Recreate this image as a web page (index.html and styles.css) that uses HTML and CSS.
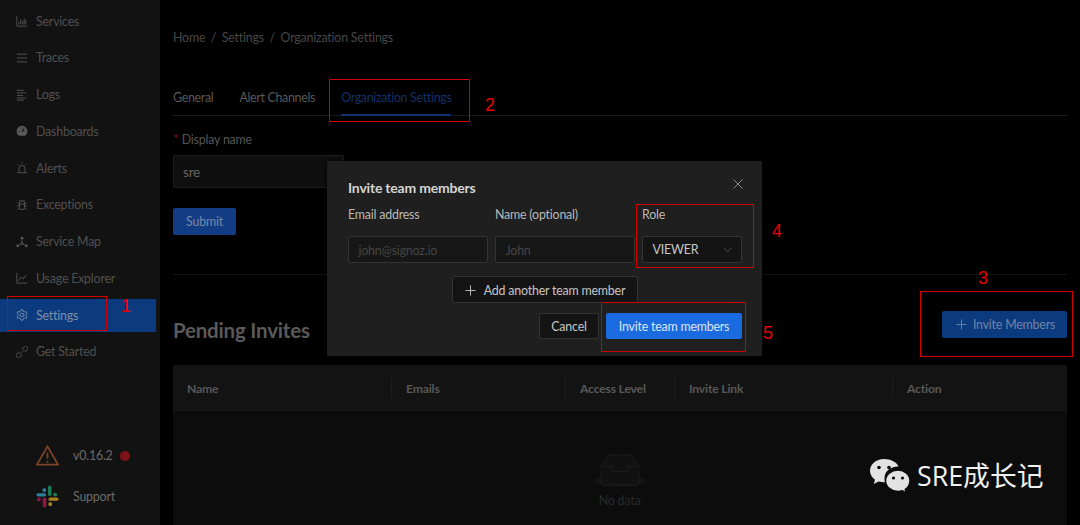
FILE: index.html
```html
<!DOCTYPE html>
<html lang="en">
<head>
<meta charset="utf-8">
<title>Organization Settings</title>
<link rel="stylesheet" href="styles.css">
</head>
<body>
<div class="page">
  <aside class="sidebar">
    <nav class="nav">
      <a class="nav-item"><svg class="ico" viewBox="0 0 14 14"><path d="M1 1v12h12M3.500 11V8M5.500 11V5M7.500 11V7M9.500 11V4M11.500 11V6" /></svg>Services</a>
      <a class="nav-item"><svg class="ico" viewBox="0 0 14 14"><path d="M1 2.500h12M1 7h12M1 11.500h12"/></svg>Traces</a>
      <a class="nav-item"><svg class="ico" viewBox="0 0 14 14"><path d="M1 1.500h8M1 4.500h11M1 7.500h7M1 10.500h11M1 13h8"/></svg>Logs</a>
      <a class="nav-item"><svg class="ico" viewBox="0 0 14 14"><path class="fill" d="M7 1a6.300 6.300 0 0 0-6.300 6.300c0 2.200 1 4 2.600 5.200h7.400c1.600-1.200 2.600-3 2.600-5.200A6.300 6.300 0 0 0 7 1z"/><path class="cut" d="M7 8l2.500-3.500M3 7.500h1M10.500 7.500h.6M7 3v1"/></svg>Dashboards</a>
      <a class="nav-item"><svg class="ico" viewBox="0 0 14 14"><path d="M3.500 12V7.500a3.500 3.500 0 0 1 7 0V12M1.500 12.500h11M7 .5v1.500M1.800 2.200l1.200 1.200M12.200 2.200L11 3.400"/></svg>Alerts</a>
      <a class="nav-item"><svg class="ico" viewBox="0 0 14 14"><path d="M4 5a3 3 0 0 1 6 0v4.500a3 3 0 0 1-6 0zM4 6h6M4.800 2.500L3.500.8M9.200 2.500L10.500.8M4 5.500L1.500 4M10 5.500L12.500 4M4 8H1M10 8h3M4 10.500L1.500 12.500M10 10.500l2.500 2"/></svg>Exceptions</a>
      <a class="nav-item"><svg class="ico" viewBox="0 0 14 14"><circle class="fill" cx="7" cy="2.500" r="1.600"/><circle class="fill" cx="2" cy="11.500" r="1.600"/><circle class="fill" cx="12" cy="11.500" r="1.600"/><circle cx="7" cy="8.500" r="1.300"/><path d="M7 4v3M6 9.500l-3 1.500M8 9.500l3 1.500"/></svg>Service Map</a>
      <a class="nav-item"><svg class="ico" viewBox="0 0 14 14"><path d="M1 1v12h12M3 10l3-4 2.500 2L12 3.500"/></svg>Usage Explorer</a>
      <a class="nav-item active"><svg class="ico" viewBox="0 0 14 14"><path d="M5.800 1h2.400l.4 1.800 1.300.7 1.800-.6 1.200 2.100-1.400 1.200v1.600l1.400 1.200-1.200 2.100-1.800-.6-1.300.7L8.200 13H5.800l-.4-1.800-1.300-.7-1.800.6-1.200-2.100 1.400-1.200V6.200L1.100 5l1.200-2.100 1.800.6 1.300-.7z"/><circle cx="7" cy="7" r="2.200"/></svg>Settings</a>
      <a class="nav-item"><svg class="ico" viewBox="0 0 14 14"><path d="M6 8l2-2M7.500 2.500l1.500-1.500a2.800 2.800 0 0 1 4 4l-1.500 1.500-1.200-.4-2.400-2.400zM6.500 11.500L5 13a2.800 2.800 0 0 1-4-4l1.500-1.500 1.200.4 2.400 2.400z"/></svg>Get Started</a>
    </nav>
    <div class="side-foot">
      <div class="foot-row">
        <svg class="foot-ico" viewBox="0 0 24 22"><path class="warn" d="M12 1.500L23 20.500H1z"/><path class="warn" d="M12 8v6.500M12 16.500v2"/></svg>
        <span>v0.16.2</span><i class="dot"></i>
      </div>
      <div class="foot-row">
        <svg class="foot-ico" viewBox="0 0 24 24">
          <g fill="#2b7f9b"><rect x="0.500" y="8.500" width="10" height="3.500" rx="1.700"/><rect x="6.800" y="3.500" width="3.700" height="3.700" rx="1.500"/></g>
          <g fill="#1b7a58"><rect x="12.500" y="0.500" width="3.700" height="11" rx="1.800"/><rect x="18" y="8" width="4" height="4" rx="2"/></g>
          <g fill="#a8801f"><rect x="13" y="13" width="10.500" height="3.500" rx="1.700"/><rect x="13" y="18" width="3.700" height="4" rx="1.500"/></g>
          <g fill="#8c1743"><rect x="7" y="13" width="3.800" height="10.500" rx="1.800"/><rect x="1" y="13" width="4" height="4" rx="2"/></g>
        </svg>
        <span>Support</span>
      </div>
    </div>
  </aside>

  <main class="main">
    <div class="crumbs"><span>Home</span><b>/</b><span>Settings</span><b>/</b><span>Organization Settings</span></div>
    <div class="tabs">
      <span class="tab">General</span>
      <span class="tab">Alert Channels</span>
      <span class="tab current">Organization Settings</span>
    </div>
    <form class="org-form">
      <div class="field-label"><em>*</em> Display name</div>
      <div class="org-input">sre</div>
      <div class="submit">Submit</div>
    </form>
    <hr class="rule">
    <div class="invites-head">
      <h2>Pending Invites</h2>
      <div class="invite-btn"><svg class="plus" viewBox="0 0 12 12"><path d="M6 .5v11M.5 6h11"/></svg>Invite Members</div>
    </div>
    <section class="table">
      <div class="thead">
        <div class="th">Name</div>
        <div class="th">Emails</div>
        <div class="th">Access Level</div>
        <div class="th">Invite Link</div>
        <div class="th">Action</div>
      </div>
      <div class="empty">
        <svg class="empty-ico" viewBox="0 0 54 36">
          <ellipse class="shadow" cx="27" cy="30" rx="26" ry="5.500"/>
          <path class="box" d="M8 15L16 4h22l8 11v17a2 2 0 0 1-2 2H10a2 2 0 0 1-2-2z"/>
          <path class="tray" d="M8 15h11v3.500a2 2 0 0 0 2 2h12a2 2 0 0 0 2-2V15h11"/>
        </svg>
        <div class="empty-text">No data</div>
      </div>
    </section>
  </main>
</div>

<div class="modal">
  <div class="modal-head"><span class="modal-title">Invite team members</span>
    <svg class="close" viewBox="0 0 10 10"><path d="M.5.5l9 9M9.500.5l-9 9"/></svg>
  </div>
  <div class="modal-grid">
    <label>Email address</label>
    <label>Name (optional)</label>
    <label>Role</label>
    <div class="minput ph">john@signoz.io</div>
    <div class="minput ph">John</div>
    <div class="minput sel">VIEWER<svg class="chev" viewBox="0 0 10 6"><path d="M.5.5L5 5 9.500.5"/></svg></div>
  </div>
  <div class="add-wrap"><div class="add-btn"><svg class="plus light" viewBox="0 0 12 12"><path d="M6 .5v11M.5 6h11"/></svg>Add another team member</div></div>
  <div class="modal-foot">
    <div class="cancel">Cancel</div>
    <div class="primary">Invite team members</div>
  </div>
</div>

<div class="mark box-1"></div><span class="num n1">1</span>
<div class="mark box-2"></div><span class="num n2">2</span>
<div class="mark box-3"></div><span class="num n3">3</span>
<div class="mark box-4"></div><span class="num n4">4</span>
<div class="mark box-5"></div><span class="num n5">5</span>

<div class="watermark">
  <svg class="wechat" viewBox="0 0 42 36">
    <path class="wc" d="M15 1C7 1 1 6.300 1 12.800c0 3.700 2 6.900 5 9l-1.300 4.200 4.800-2.600c1.800.5 3.600.8 5.500.8h1.200c-.5-1.300-.7-2.600-.7-4 0-6.500 6-11.600 13.300-11.600h.8C27.800 4.300 22 1 15 1z"/>
    <circle class="wd" cx="10" cy="9.500" r="1.800"/><circle class="wd" cx="20" cy="9.500" r="1.800"/>
    <path class="wc ring" d="M29 12c-6.800 0-12.500 4.700-12.500 10.700S22.200 33.400 29 33.400c1.500 0 3-.3 4.300-.7l4 2.300-1-3.600c3-2 4.700-4.900 4.700-8.700C41 16.700 35.800 12 29 12z"/>
    <circle class="wd" cx="24.500" cy="20" r="1.600"/><circle class="wd" cx="33.500" cy="20" r="1.600"/>
  </svg>
  <span class="wm-text">SRE成长记</span>
</div>
</body>
</html>
```

FILE: styles.css
```css
* { box-sizing: border-box; }
html, body { margin: 0; height: 525px; overflow: hidden; background: #000; }
body { font-family: Lato, "Noto Sans", "Noto Sans CJK SC", sans-serif; font-size: 12.400px; letter-spacing: -.2px; color: #5a5a5a; position: relative; }
.page { display: flex; width: 1080px; height: 525px; }

.sidebar { width: 160px; flex: none; background: #121212; padding: 4.500px 4px 0 0; display: flex; flex-direction: column; }
.nav { display: flex; flex-direction: column; gap: 3.780px; }
.nav-item { height: 33px; display: flex; align-items: center; padding-left: 16px; gap: 8.500px; color: #505050; }
.nav-item.active { background: #0c3a7f; color: #7f8fa8; }
.ico { width: 12px; height: 12px; flex: none; margin-left: -.5px; fill: none; stroke: #5a5a5a; stroke-width: 1; }
.ico .fill { fill: #5a5a5a; stroke: none; }
.ico .cut { stroke: #121212; stroke-width: 1.200; }
.active .ico { stroke: #8394ad; }
.side-foot { margin-top: 75px; padding-left: 36px; display: flex; flex-direction: column; gap: 17px; color: #6a6a6a; }
.foot-row { display: flex; align-items: center; height: 24px; gap: 14px; }
.foot-ico { width: 23px; height: 23px; flex: none; }
.warn { fill: none; stroke: #7c4528; stroke-width: 1.800; }
.dot { width: 10px; height: 10px; border-radius: 50%; background: #7d1316; margin-left: -7px; margin-top: 2px; }

.main { flex: 1; min-width: 0; padding: 29px 13px 0; display: flex; flex-direction: column; }
.crumbs { height: 18px; line-height: 18px; display: flex; gap: 5.600px; color: #474747; }
.crumbs b { font-weight: 400; }
.tabs { margin-top: 33px; height: 36px; display: flex; gap: 26px; border-bottom: 1px solid #1a1a1a; color: #595959; letter-spacing: -.3px; }
.tab { height: 36px; line-height: 36px; }
.tab.current { color: #11316a; border-bottom: 2px solid #11316a; }

.org-form { margin-top: 14px; }
.field-label { line-height: 18px; color: #555; }
.field-label em { color: #6a1414; font-style: normal; font-size: 14px; }
.org-input { margin-top: 6px; width: 171px; height: 33px; line-height: 32px; padding-left: 9px; background: #0f0f0f; border: 1px solid #1e1e1e; border-radius: 2px; color: #666; font-size: 13.500px; }
.submit { margin-top: 20px; width: 63px; height: 27px; line-height: 27px; text-align: center; background: #123d84; border-radius: 2px; color: #7488a8; }
.rule { margin: 39px 0 0; border: 0; border-top: 1px solid #141414; width: 100%; }

.invites-head { margin-top: 36px; height: 27px; display: flex; align-items: center; justify-content: space-between; }
.invites-head h2 { margin: 12px 0 0; font-size: 20.500px; line-height: 27px; font-weight: 700; color: #5a5a5a; }
.invite-btn { width: 125px; height: 27px; padding: 0 0 1px 2px; display: flex; align-items: center; justify-content: center; gap: 6px; background: #0c3a7f; border-radius: 2px; color: #6f83a3; }
.plus { width: 11px; height: 11px; flex: none; fill: none; stroke: #6f83a3; stroke-width: 1; }
.plus.light { stroke: #c8c8c8; }

.table { margin-top: 27px; flex: 1; background: #0c0c0c; }
.thead { height: 46px; display: grid; grid-template-columns: 218px 174px 109px 218px 175px; align-items: center; background: #131313; border-bottom: 1px solid #181818; }
.th { height: 21px; line-height: 23px; padding-left: 14px; border-left: 1px solid #1e1e1e; color: #585858; font-weight: 700; font-size: 12.200px; }
.th:first-child { border-left: 0; }
.empty { display: flex; flex-direction: column; align-items: center; padding: 40px 0 0 0; margin-left: -1px; }
.empty-ico { width: 54px; height: 36px; }
.shadow { fill: #141414; }
.box { fill: #111; stroke: #1d1d1d; }
.tray { fill: none; stroke: #1d1d1d; }
.empty-text { margin-top: 5px; color: #2a2a2a; line-height: 18px; }

.modal { position: absolute; left: 327px; top: 161px; width: 435px; height: 195px; background: #1f1f1f; padding: 18px 20px 0 21px; color: #b5b5b5; box-shadow: 0 0 4px #000; }
.modal-head { height: 18px; padding-bottom: 2px; display: flex; align-items: center; justify-content: space-between; }
.modal-title { font-weight: 700; color: #d4d4d4; font-size: 14px; }
.close { width: 10px; height: 10px; fill: none; stroke: #8a8a8a; stroke-width: 1; margin: -6px -1px 0 0; }
.modal-grid { margin-top: 8px; display: grid; grid-template-columns: 140px 140px 100px; column-gap: 7px; row-gap: 12px; width: 394px; }
.modal-grid label { line-height: 19px; color: #b9b9b9; }
.minput { height: 27px; line-height: 27px; padding-left: 9.500px; background: #171717; border: 1px solid #333; border-radius: 2px; }
.ph { color: #444; }
.sel { color: #c6c6c6; background: #141414; display: flex; align-items: center; justify-content: space-between; padding-right: 9px; font-size: 12.500px; }
.chev { width: 9px; height: 6px; fill: none; stroke: #555; stroke-width: 1; }
.add-wrap { margin-top: 13px; margin-left: 104px; }
.add-btn { width: 186px; height: 27px; padding-top: 1px; display: flex; align-items: center; justify-content: center; gap: 8px; background: #141414; border: 1px solid #333; border-radius: 2px; color: #c6c6c6; }
.modal-foot { margin-top: 10px; display: flex; gap: 7px; padding-left: 191px; }
.cancel { width: 60px; height: 26px; line-height: 26px; text-align: center; background: #141414; border: 1px solid #333; border-radius: 2px; color: #c6c6c6; }
.primary { width: 136px; height: 26px; line-height: 28px; text-align: center; background: #1a6ae0; border-radius: 2px; color: #dbe6f7; }

.mark { position: absolute; border: 1.500px solid #d00000; }
.box-1 { left: 7px; top: 296px; width: 100px; height: 35px; }
.box-2 { left: 329px; top: 79px; width: 141px; height: 43px; }
.box-3 { left: 920px; top: 291px; width: 153px; height: 66px; }
.box-4 { left: 636px; top: 204px; width: 118px; height: 64px; }
.box-5 { left: 601px; top: 302px; width: 145px; height: 50px; }
.num { position: absolute; color: #e80000; font-size: 18px; line-height: 20px; letter-spacing: 0; font-family: "Liberation Sans", sans-serif; }
.n1 { left: 121px; top: 296px; }
.n2 { left: 485px; top: 95px; }
.n3 { left: 978px; top: 268px; }
.n4 { left: 772px; top: 221px; }
.n5 { left: 763px; top: 323px; }

.watermark { position: absolute; left: 869px; top: 458px; display: flex; align-items: center; gap: 6px; height: 36px; }
.wechat { width: 42px; height: 36px; flex: none; }
.wc { fill: #e2e2e2; }
.wc.ring { stroke: #0c0c0c; stroke-width: 1.500; }
.wd { fill: #0c0c0c; }
.wm-text { font-family: "Open Sans", "Noto Sans CJK SC", sans-serif; font-size: 26.800px; letter-spacing: 0; color: #f0f0f0; line-height: 36px; }
```
